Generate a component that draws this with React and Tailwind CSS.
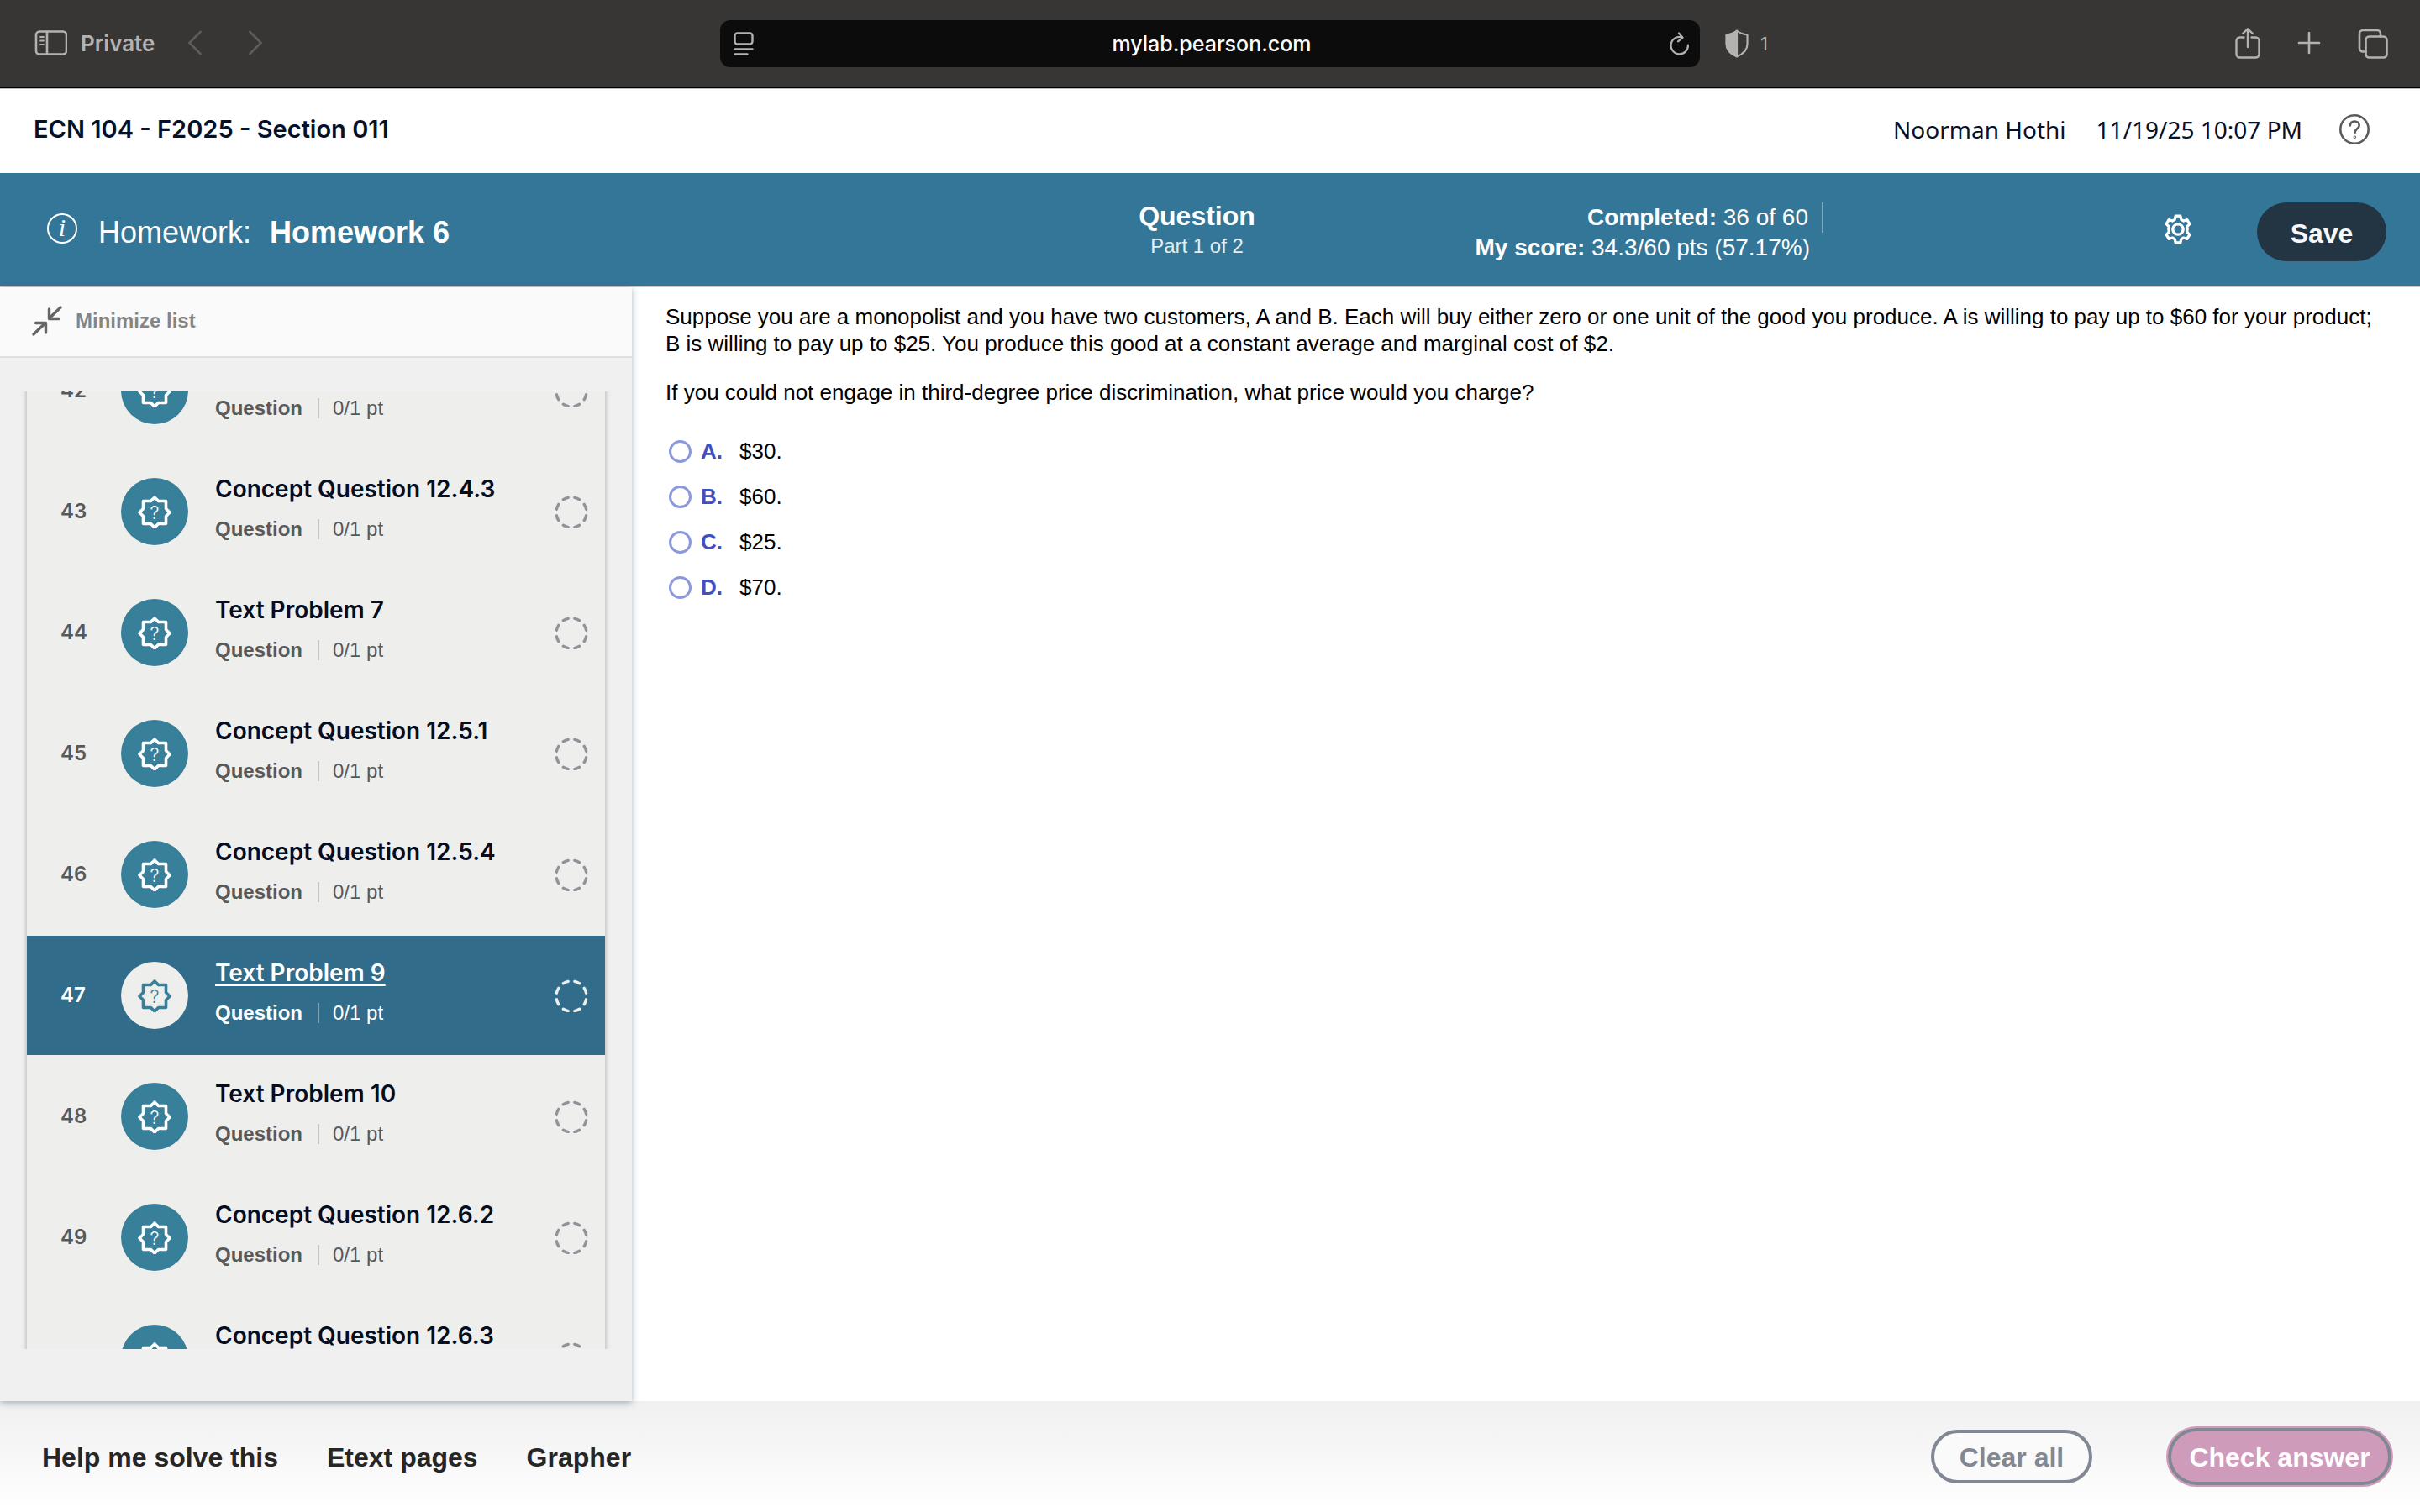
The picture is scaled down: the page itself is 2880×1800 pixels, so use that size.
import React, { useState } from 'react';

const questions = [
  { num: 42, title: 'Concept Question 12.4.1' },
  { num: 43, title: 'Concept Question 12.4.3' },
  { num: 44, title: 'Text Problem 7' },
  { num: 45, title: 'Concept Question 12.5.1' },
  { num: 46, title: 'Concept Question 12.5.4' },
  { num: 47, title: 'Text Problem 9' },
  { num: 48, title: 'Text Problem 10' },
  { num: 49, title: 'Concept Question 12.6.2' },
  { num: 50, title: 'Concept Question 12.6.3' },
];

const choices = [
  { letter: 'A', text: '$30.' },
  { letter: 'B', text: '$60.' },
  { letter: 'C', text: '$25.' },
  { letter: 'D', text: '$70.' },
];

function Stroke({ className, viewBox, width = 3, children }) {
  return (
    <svg className={className} viewBox={viewBox} fill="none" stroke="currentColor" strokeWidth={width} strokeLinecap="round" strokeLinejoin="round" aria-hidden="true">
      {children}
    </svg>
  );
}

function BrowserBar() {
  return (
    <div className="grid h-[106px] grid-cols-[1fr_1166px_1fr] items-center border-b border-[#b9b9b9] bg-[#383634] pb-px font-['Inter',sans-serif] text-[#b3b2b1] shadow-[inset_0_-1px_0_#000]">
      <div className="flex items-center pl-10">
        <button aria-label="Show sidebar">
          <Stroke className="h-8 w-10" viewBox="0 0 40 32" width={2.6}>
            <rect x="3" y="1.500" width="36" height="27" rx="4" />
            <path d="M16 2v26" />
            <path d="M8 8h4M8 12.500h4M8 17h4" strokeWidth="1.8" />
          </Stroke>
        </button>
        <span className="ml-4 text-[26px] leading-8 font-semibold">Private</span>
        <button aria-label="Back" className="ml-10 text-[#5f5d5c]">
          <Stroke className="h-8 w-4" viewBox="0 0 16 32" width={2.6}>
            <path d="M14.500 2L1.500 15l13 13" />
          </Stroke>
        </button>
        <button aria-label="Forward" className="ml-14 text-[#5f5d5c]">
          <Stroke className="h-8 w-4" viewBox="0 0 16 32" width={2.6}>
            <path d="M1.500 2l13 13-13 13" />
          </Stroke>
        </button>
      </div>

      <div className="flex h-14 items-center rounded-xl bg-[#0c0c0c] pr-3 pl-4">
        <button aria-label="Reader">
          <Stroke className="h-7 w-6" viewBox="0 0 24 28" width={2.4}>
            <rect x="1.500" y="1.500" width="21" height="13" rx="3" />
            <path d="M1.500 20.500h21M1.500 26.500h15" />
          </Stroke>
        </button>
        <input
          aria-label="Address"
          defaultValue="mylab.pearson.com"
          className="min-w-0 flex-1 bg-transparent text-center text-[25px] leading-8 font-medium text-white outline-none"
        />
        <button aria-label="Reload">
          <Stroke className="h-7 w-6" viewBox="0 0 24 28" width={2.2}>
            <path d="M21.900 15.500a10.200 10.200 0 1 1-6.900-9" />
            <path d="M11 1.500l4.500 5.300-5.500 4.500" />
          </Stroke>
        </button>
      </div>

      <div className="flex items-center pr-[38px] pl-[30px]">
        <button aria-label="Privacy report" className="flex items-center gap-3.5 text-[22px] leading-8">
          <svg className="h-[34px] w-7" viewBox="0 0 28 34" fill="none" stroke="currentColor" strokeWidth="2.2" strokeLinejoin="round" aria-hidden="true">
            <path d="M14 1.500c4 3.200 8 4.300 12.500 5v11c0 7-4.500 11.500-12.500 15-8-3.500-12.500-8-12.500-15v-11C6 5.800 10 4.700 14 1.500z" />
            <path d="M14 2v30c-8-3.500-12-8-12-15V7c4-.7 8-1.800 12-5z" fill="currentColor" />
          </svg>
          1
        </button>
        <button aria-label="Share" className="ml-auto">
          <Stroke className="h-[38px] w-[30px]" viewBox="0 0 30 38" width={2.4}>
            <path d="M10.500 11.500h-5a4 4 0 0 0-4 4v16a4 4 0 0 0 4 4h19a4 4 0 0 0 4-4v-16a4 4 0 0 0-4-4h-5" />
            <path d="M15 23V1.500M9 7L15 1.300 21 7" />
          </Stroke>
        </button>
        <button aria-label="New tab" className="ml-11">
          <Stroke className="size-7" viewBox="0 0 28 28" width={2.6}>
            <path d="M14 1v24M2 13h24" />
          </Stroke>
        </button>
        <button aria-label="Tab overview" className="ml-11">
          <Stroke className="size-9" viewBox="0 0 36 36" width={2.6}>
            <rect x="9.500" y="9.500" width="25" height="25" rx="4" />
            <path d="M9.500 27.500H6a4 4 0 0 1-4-4V6a4 4 0 0 1 4-4h17a4 4 0 0 1 4 4v3.500" />
          </Stroke>
        </button>
      </div>
    </div>
  );
}

function CourseHeader() {
  return (
    <header className="flex h-[100px] items-center bg-white pr-[58px] pb-1 pl-10 text-[#05112a]">
      <h1 className="flex-1 font-['Inter',sans-serif] text-[29px] leading-10 font-semibold">ECN 104 - F2025 - Section 011</h1>
      <span className="font-['Noto_Sans',sans-serif] text-[28px] leading-10">Noorman Hothi</span>
      <span className="ml-9 font-['Noto_Sans',sans-serif] text-[28px] leading-10">11/19/25 10:07 PM</span>
      <button aria-label="Help" className="ml-[42px] text-[#5a5c5b]">
        <Stroke className="size-10" viewBox="0 0 40 40" width={2.6}>
          <circle cx="20" cy="20" r="16.700" />
          <path d="M14.800 15.500c.3-3.400 2.500-5 5.400-5 3.200 0 5.500 1.800 5.500 4.700 0 4.300-5.300 4-5.300 9" />
          <circle cx="20.300" cy="29.200" r=".5" />
        </Stroke>
      </button>
    </header>
  );
}

function HomeworkBar() {
  return (
    <div className="grid h-[136px] grid-cols-[1fr_auto_1fr] items-center border-b-2 border-[#c9cad9] bg-[#347697] pr-10 pl-[9px] text-white">
      <div className="flex items-center pl-[46px]">
        <button aria-label="Assignment info">
          <svg className="size-[38px]" viewBox="0 0 38 38" aria-hidden="true">
            <circle cx="19" cy="18" r="17" fill="none" stroke="currentColor" strokeWidth="2" />
            <text x="19" y="27" textAnchor="middle" fill="currentColor" className="font-['Liberation_Serif',serif] text-[30px] italic">i</text>
          </svg>
        </button>
        <h2 className="ml-6 pt-2 text-4xl leading-10">
          Homework: <b className="ml-3">Homework 6</b>
        </h2>
      </div>
      <div className="pt-1 text-center">
        <p className="text-[32px] leading-9 font-bold">Question</p>
        <p className="text-2xl leading-9 text-[#e3edf2]">Part 1 of 2</p>
      </div>
      <div className="flex items-center justify-end">
        <div className="pt-2 text-right text-[28px] leading-9">
          <p className="flex items-center justify-end gap-4">
            <span><b>Completed:</b> 36 of 60</span>
            <span className="-mr-4 h-9 w-0.5 bg-[#7fabc0]"></span>
          </p>
          <p><b>My score:</b> 34.3/60 pts (57.17%)</p>
        </div>
        <button aria-label="Settings" className="ml-[418px]">
          <Stroke className="size-10" viewBox="0 0 24 24" width={2}>
            <path d="M10.300 2.500h3.400l.6 2.500 1.700 1 2.500-.8 1.800 3-1.900 1.900a6.500 6.500 0 0 1 0 3.800l1.900 1.900-1.800 3-2.500-.8-1.700 1-.6 2.500h-3.400l-.6-2.500-1.700-1-2.500.8-1.800-3 1.900-1.900a6.500 6.500 0 0 1 0-3.800L3.700 8.200l1.800-3 2.500.8 1.700-1z" />
            <circle cx="12" cy="12" r="3.700" />
          </Stroke>
        </button>
        <button className="mt-1.5 ml-[74px] h-[70px] w-[154px] rounded-full bg-[#233443] pt-1 text-[32px] leading-9 font-bold text-[#f7f8fd]">Save</button>
      </div>
    </div>
  );
}

function QuestionRow({ question, active, onSelect }) {
  return (
    <li className={`mb-0.5 flex h-[142px] items-center pr-5 ${active ? 'bg-[#316d8b] text-white' : 'text-[#595959]'}`}>
      <span className="w-28 pl-10 font-['Inter',sans-serif] text-2xl leading-6 font-semibold">{question.num}</span>
      <span className={`flex size-20 items-center justify-center rounded-full ${active ? 'bg-[#eeeeec] text-[#387f99]' : 'bg-[#387f99] text-white'}`}>
        <svg className="size-10" viewBox="-20 -21 40 40" fill="none" stroke="currentColor" strokeWidth="3.600" strokeLinejoin="round" aria-hidden="true">
          <path d="M0-18L4.500-13.500H13.500V-4.500L18 0L13.500 4.500V13.500H4.500L0 18L-4.500 13.500H-13.500V4.500L-18 0L-13.500-4.500V-13.500H-4.500z" />
          <text x="0" y="8" textAnchor="middle" fill="currentColor" stroke="none" className="font-['Inter',sans-serif] text-[22px] font-light">?</text>
        </svg>
      </span>
      <div className="ml-8 flex-1 pb-3.5">
        <a
          href={`#question-${question.num}`}
          onClick={() => onSelect(question.num)}
          className={`block font-['Inter',sans-serif] text-[28px] leading-10 font-semibold ${active ? 'underline decoration-2 underline-offset-4' : 'text-[#050d1e]'}`}
        >
          {question.title}
        </a>
        <p className="mt-4 flex items-center text-2xl leading-6">
          <b>Question</b>
          <span className={`mr-4 ml-[18px] h-6 w-0.5 ${active ? 'bg-[#7ea4b7]' : 'bg-[#c4c4c4]'}`}></span>
          0/1 pt
        </p>
      </div>
      <svg className={`size-10 ${active ? 'text-[#eeeeec]' : 'text-[#929399]'}`} viewBox="0 -1 40 40" fill="none" aria-hidden="true">
        <circle cx="20" cy="20" r="18" pathLength="80" stroke="currentColor" strokeWidth="3.400" strokeLinecap="round" strokeDasharray="4.400 5.600" strokeDashoffset="-2.800" />
      </svg>
    </li>
  );
}

function Sidebar({ current, onSelect }) {
  return (
    <aside className="relative z-10 flex w-[752px] flex-col bg-[#f0f0f0] shadow-[0_2px_8px_rgba(40,70,90,0.4)]">
      <button className="flex h-[84px] items-center border-b-2 border-[#dfdfdf] bg-[#fafafa] pb-0.5 pl-[38px] text-2xl font-bold text-[#858585]">
        <Stroke className="size-9 text-[#666]" viewBox="0 0 36 36" width={3.4}>
          <path d="M34 2L20.500 15M20.500 4v11.500H32" />
          <path d="M2 34l14-13.500M4.500 20.500h12V32" />
        </Stroke>
        <span className="ml-4">Minimize list</span>
      </button>
      <div className="mx-6 mt-10 mb-[62px] h-[1140px] overflow-hidden px-2">
        <ul className="-mt-18 bg-[#eeeeec] shadow-[0_0_6px_rgba(60,60,90,0.4)]">
          {questions.map(q => (
            <QuestionRow key={q.num} question={q} active={q.num === current} onSelect={onSelect} />
          ))}
        </ul>
      </div>
    </aside>
  );
}

function QuestionPanel() {
  const [answer, setAnswer] = useState(null);

  return (
    <main className="flex-1 px-10 pt-[19px] text-[26px] leading-8 text-black">
      <p>
        Suppose you are a monopolist and you have two customers, A and B. Each will buy either zero or one unit of the good you produce. A is willing to pay up to $60 for your product; B is willing to pay up to $25. You produce this good at a constant average and marginal cost of $2.
      </p>
      <p className="mt-[26px]">If you could not engage in third-degree price discrimination, what price would you charge?</p>
      <div className="mt-[38px] flex flex-col gap-[22px]">
        {choices.map(c => (
          <label key={c.letter} className="flex items-center pl-1">
            <input
              type="radio"
              name="answer"
              checked={answer === c.letter}
              onChange={() => setAnswer(c.letter)}
              className="size-[27px] appearance-none rounded-full border-3 border-[#8b98dd] bg-white checked:border-8"
            />
            <b className="ml-[11px] w-[46px] text-[#3f51c0]">{c.letter}.</b>
            {c.text}
          </label>
        ))}
      </div>
    </main>
  );
}

function Footer() {
  return (
    <footer className="flex h-[132px] items-center bg-linear-to-b from-[#f0f0f0] to-white pr-8 pl-[50px] text-[32px] leading-9 font-bold text-[#262626]">
      <button className="pt-0.5">Help me solve this</button>
      <button className="ml-[58px] pt-0.5">Etext pages</button>
      <button className="ml-[58px] pt-0.5">Grapher</button>
      <button className="ml-auto h-16 w-[192px] rounded-full border-4 border-[#818894] bg-[#fafafa] pt-0.5 text-[#818894]">Clear all</button>
      <button className="ml-[88px] h-[72px] w-[270px] rounded-full border-2 border-[#cf9bbb] bg-[#cf9bbb] pt-0.5 text-white inset-ring-4 inset-ring-[#818894]">Check answer</button>
    </footer>
  );
}

export default function App() {
  const [current, setCurrent] = useState(47);

  return (
    <div className="min-h-screen bg-white font-['Liberation_Sans',Arial,sans-serif]">
      <BrowserBar />
      <CourseHeader />
      <HomeworkBar />
      <div className="flex">
        <Sidebar current={current} onSelect={setCurrent} />
        <QuestionPanel />
      </div>
      <Footer />
    </div>
  );
}
